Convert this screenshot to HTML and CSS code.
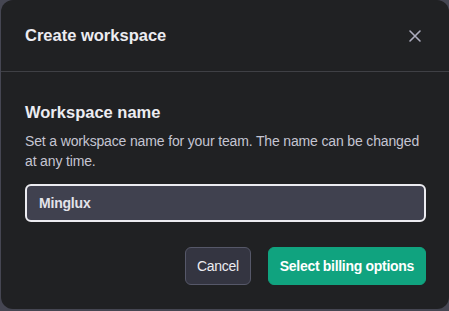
FILE: index.html
```html
<!DOCTYPE html>
<html lang="en">
<head>
    <meta charset="UTF-8">
    <meta name="viewport" content="width=device-width, initial-scale=1.0">
    <title>Create workspace</title>
    <link rel="stylesheet" href="styles.css">
</head>
<body>
    <div class="dialog">
        <div class="dialog-header">
            <h2>Create workspace</h2>
            <button class="close-btn" type="button" aria-label="Close">
                <svg width="14" height="14" viewBox="0 0 14 14" fill="none" stroke="currentColor" stroke-width="1.6" stroke-linecap="round">
                    <path d="M2 2L12 12M12 2L2 12"/>
                </svg>
            </button>
        </div>
        <div class="dialog-body">
            <h3>Workspace name</h3>
            <p>Set a workspace name for your team. The name can be changed at any time.</p>
            <input class="name-input" type="text" value="Minglux">
            <div class="actions">
                <button class="btn btn-neutral" type="button">Cancel</button>
                <button class="btn btn-primary" type="button">Select billing options</button>
            </div>
        </div>
    </div>
</body>
</html>
```

FILE: styles.css
```css
body {
    margin: 0;
    padding: 0;
    background-color: #454652;
    font-family: "Liberation Sans", Arial, sans-serif;
    color: #ececf1;
}
.dialog {
    box-sizing: border-box;
    width: 448px;
    height: 309px;
    margin-left: 1px;
    background-color: #202123;
    border-radius: 12px;
    overflow: hidden;
}
.dialog-header {
    display: flex;
    justify-content: space-between;
    align-items: center;
    height: 72px;
    padding: 0 27px 0 24px;
    border-bottom: 1px solid #3f4045;
    box-sizing: border-box;
}
.dialog-header h2 {
    margin: 0;
    font-size: 16.5px;
    font-weight: 700;
    color: #ececf1;
}
.close-btn {
    background: none;
    border: none;
    padding: 0;
    color: #acacbe;
    display: flex;
    cursor: pointer;
}
.dialog-body {
    padding: 28px 23px 0 24px;
}
.dialog-body h3 {
    margin: 0;
    font-size: 16.5px;
    font-weight: 700;
    line-height: 24px;
    color: #ececf1;
}
.dialog-body p {
    margin: 7px 0 13px 0;
    font-size: 14px;
    line-height: 20px;
    letter-spacing: -0.15px;
    color: #c5c5d2;
}
.name-input {
    display: block;
    width: 100%;
    box-sizing: border-box;
    height: 38px;
    padding: 0 12px;
    background-color: #40414f;
    border: 2px solid #ececf1;
    border-radius: 6px;
    color: #e3e3ea;
    font-family: inherit;
    font-size: 14px;
    font-weight: 700;
    letter-spacing: -0.2px;
    outline: none;
}
.actions {
    display: flex;
    justify-content: flex-end;
    gap: 17px;
    margin-top: 25px;
}
.btn {
    height: 38px;
    padding: 0 11px;
    border-radius: 6px;
    font-family: inherit;
    font-size: 14px;
    font-weight: 400;
    letter-spacing: -0.3px;
    cursor: pointer;
}
.btn-neutral {
    background-color: #343541;
    border: 1px solid #565869;
    color: #ececf1;
}
.btn-primary {
    background-color: #10a37f;
    border: 1px solid #10a37f;
    color: #ffffff;
    font-weight: 700;
}
```
